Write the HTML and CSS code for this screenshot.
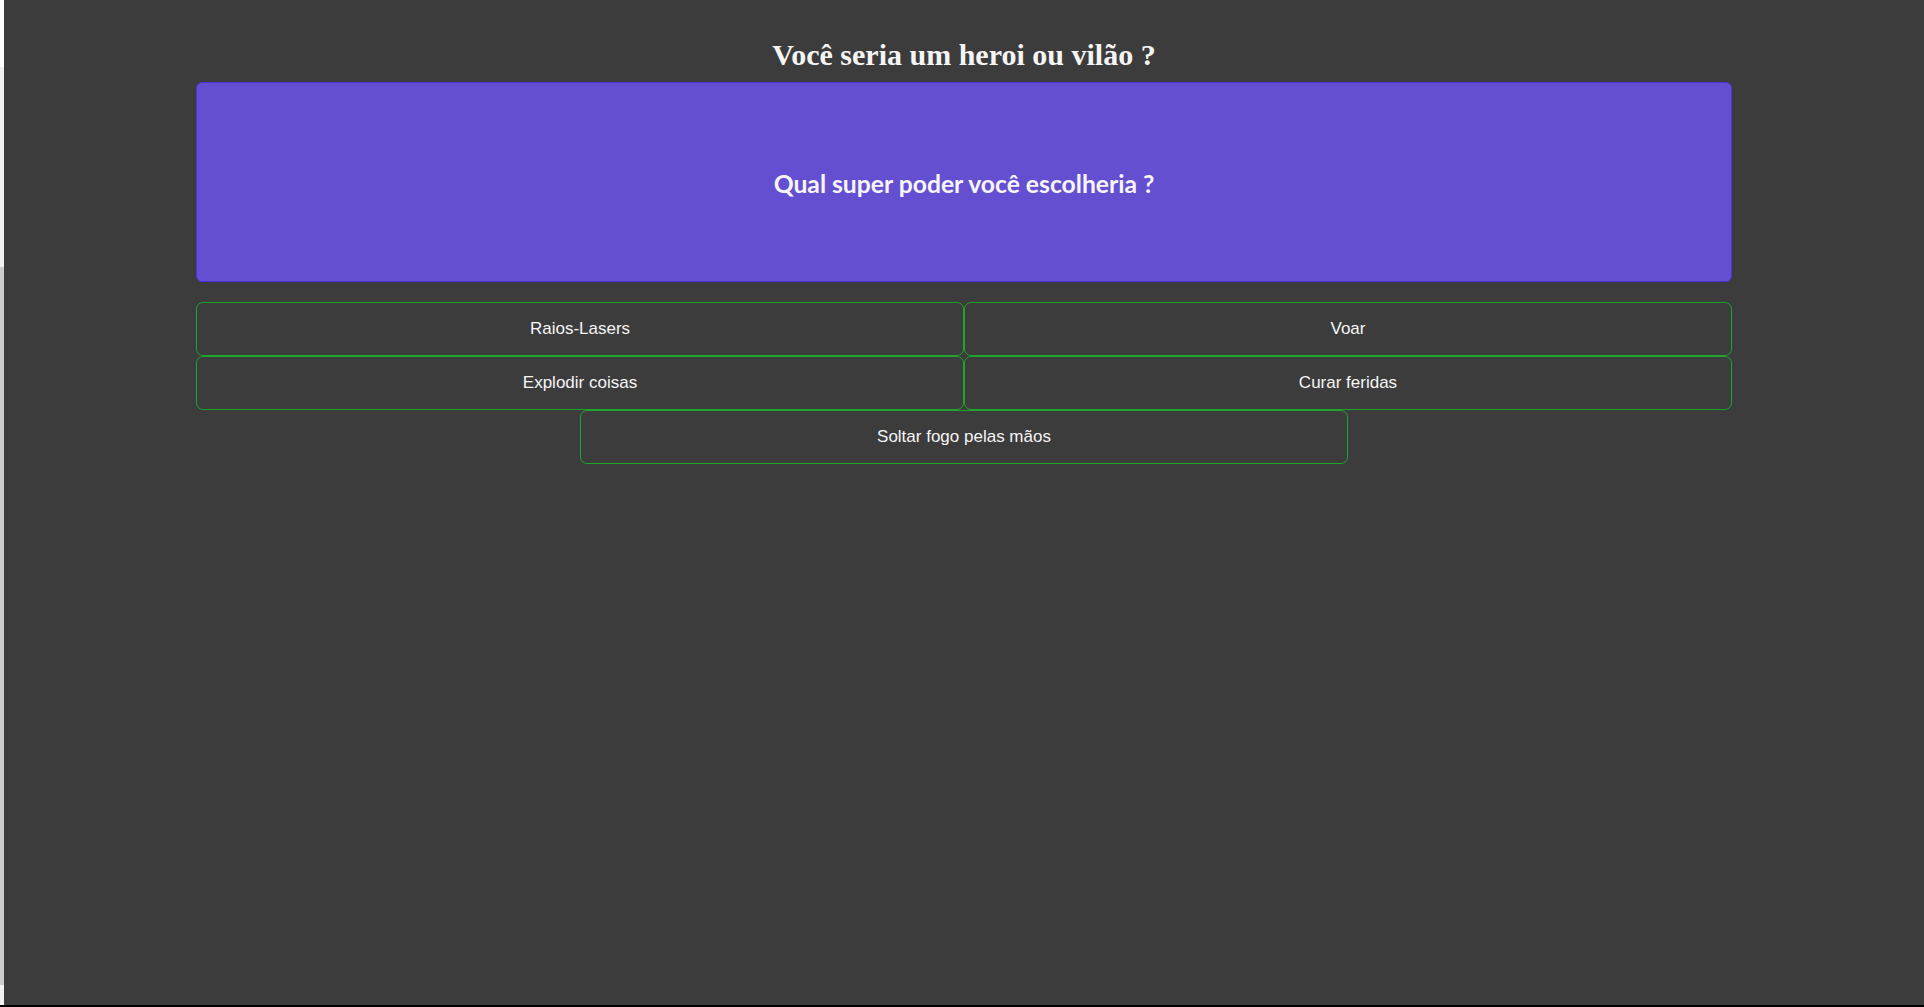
FILE: index.html
```html
<!DOCTYPE html>
<html lang="pt-BR">
<head>
<meta charset="utf-8">
<title>Você seria um heroi ou vilão ?</title>
<link rel="stylesheet" href="styles.css">
</head>
<body>
<div class="screen">
  <div class="row">
    <div class="edge">
      <div class="edge-top"></div>
      <div class="edge-rest">
        <div class="edge-thumb"></div>
      </div>
    </div>
    <main class="page">
      <div class="container">
        <h1 class="title">Você seria um heroi ou vilão ?</h1>
        <section class="question">
          <h2 class="question-text">Qual super poder você escolheria ?</h2>
        </section>
        <div class="answers">
          <button class="answer">Raios-Lasers</button>
          <button class="answer">Voar</button>
          <button class="answer">Explodir coisas</button>
          <button class="answer">Curar feridas</button>
          <button class="answer answer-last">Soltar fogo pelas mãos</button>
        </div>
      </div>
    </main>
  </div>
  <div class="bottom-bar"></div>
</div>
</body>
</html>
```

FILE: styles.css
```css
html, body {
  margin: 0;
  padding: 0;
}

body {
  background: #3c3c3c;
  overflow: hidden;
}

.screen {
  display: flex;
  flex-direction: column;
  height: 1007px;
}

.row {
  display: flex;
  flex: 1;
  min-height: 0;
}

.edge {
  width: 4px;
  display: flex;
  flex-direction: column;
}

.edge-top {
  height: 67px;
  background: #ffffff;
}

.edge-rest {
  flex: 1;
  background: #f2f2f2;
  padding-top: 200px;
  padding-bottom: 20px;
  display: flex;
}

.edge-thumb {
  width: 2px;
  flex: 1;
  background: #cdcdcd;
}

.page {
  flex: 1;
  background: #3c3c3c;
}

.bottom-bar {
  height: 2px;
  background: #000000;
}

.container {
  width: 80%;
  margin: 0 auto;
  padding-top: 37px;
}

.title {
  margin: 0 0 9px;
  font-family: "Liberation Serif", "Times New Roman", serif;
  font-size: 30px;
  line-height: 36px;
  font-weight: bold;
  color: #f5f5f5;
  text-align: center;
}

.question {
  box-sizing: border-box;
  height: 200px;
  padding-top: 3px;
  background: #644fd1;
  border: 1px solid #4a32dc;
  border-radius: 6px;
  display: flex;
  align-items: center;
  justify-content: center;
}

.question-text {
  margin: 0;
  font-family: "Lato", "Open Sans", sans-serif;
  font-size: 24.7px;
  font-weight: bold;
  color: #f7f5fb;
}

.answers {
  margin-top: 20px;
  display: grid;
  grid-template-columns: 1fr 1fr;
}

.answer {
  box-sizing: border-box;
  height: 54px;
  background: transparent;
  border: 1px solid #1ea62c;
  border-radius: 7px;
  color: #f5f5f5;
  font-family: "Liberation Sans", Arial, sans-serif;
  font-size: 17px;
  padding: 0;
  cursor: pointer;
}

.answer-last {
  grid-column: 1 / span 2;
  justify-self: center;
  width: 50%;
}
```
